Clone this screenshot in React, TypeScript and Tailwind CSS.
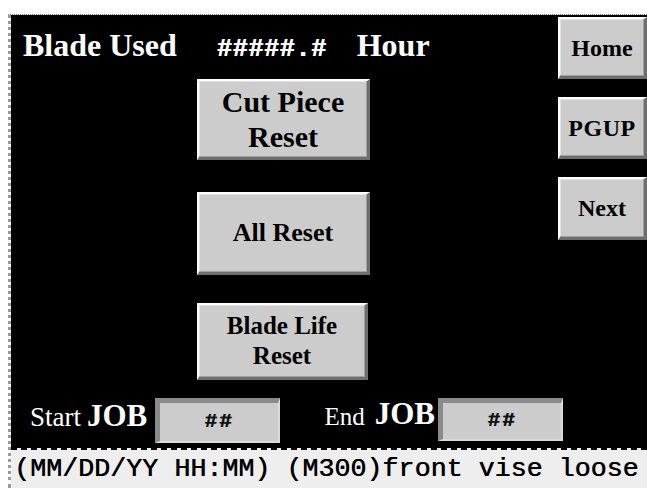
import React from "react";

const serif = "font-['Liberation_Serif','Times_New_Roman',serif]";
const mono = "font-['Liberation_Mono','Courier_New',monospace]";
const bevel =
  "bg-[#cccccc] border-t-2 border-l-2 border-t-white border-l-white border-r-[3px] border-b-[3px] border-r-[#6e6e6e] border-b-[#6e6e6e] shadow-[inset_-1px_-1px_0_#a0a0a0,inset_1px_1px_0_#e4e4e4] flex flex-col items-center justify-center text-black font-bold";
const sunken =
  "bg-[#cccccc] border-t-[5px] border-l-[5px] border-t-[#8a8a8a] border-l-[#8a8a8a] border-r-2 border-b-2 border-r-[#dadada] border-b-[#dadada] flex items-center justify-center";

export default function App() {
  return (
    <div className={`w-[647px] h-[488px] bg-white overflow-hidden pt-[14px] pl-[8px] ${serif}`}>
      <div className="h-[474px] w-[639px] bg-white border-t border-t-[#777777] border-l-[3px] border-l-[#9a9a9a] border-dotted flex flex-col">
        {/* black panel */}
        <div className="h-[433px] bg-black flex flex-col">
          <div className="flex h-[365px]">
            {/* left part */}
            <div className="w-[547px] flex flex-col">
              <div className="h-[64px] flex items-baseline pt-[14px] pl-[12px] text-white font-bold leading-[32px]">
                <span className="text-[32px]">Blade Used</span>
                <span className={`${mono} text-[25px] tracking-[0.7px] ml-[40px] [text-shadow:0.7px_0_0_#fff]`}>#####.#</span>
                <span className="text-[32px] ml-[30px]">Hour</span>
              </div>
              <div className="pl-[186px] flex flex-col">
                <div className={`${bevel} w-[173px] h-[81px] text-[30px] leading-[35px]`}>
                  <span>Cut Piece</span>
                  <span>Reset</span>
                </div>
                <div className={`${bevel} w-[173px] h-[83px] mt-[32px] text-[26px] leading-[30px]`}>
                  <span>All Reset</span>
                </div>
                <div className={`${bevel} w-[171px] h-[77px] mt-[28px] text-[25px] leading-[30px]`}>
                  <span>Blade Life</span>
                  <span>Reset</span>
                </div>
              </div>
            </div>
            {/* right column */}
            <div className="w-[89px] pt-[2px] flex flex-col gap-[18px]">
              <div className={`${bevel} border-r-0 h-[62px] text-[24px]`}>Home</div>
              <div className={`${bevel} border-r-0 h-[62px] text-[24px] tracking-[0.5px]`}>PGUP</div>
              <div className={`${bevel} border-r-0 h-[63px] text-[24px]`}>Next</div>
            </div>
          </div>
          {/* bottom row */}
          <div className="mt-[18px] h-[45px] flex items-stretch">
            <div className="w-[144px] pl-[19px] flex items-end pb-[12px] text-white leading-none">
              <span className="text-[27px]">Start</span>
              <span className="text-[31px] font-bold ml-[6px]">JOB</span>
            </div>
            <div className={`${sunken} w-[125px]`}>
              <span className={`${mono} text-[21px] font-bold tracking-[2px] text-[#111] [text-shadow:0.7px_0_0_#111]`}>##</span>
            </div>
            <div className="w-[158px] pr-[3px] flex items-end justify-end pb-[14px] text-white leading-none">
              <span className="text-[25px]">End</span>
              <span className="text-[31px] font-bold ml-[10px]">JOB</span>
            </div>
            <div className={`${sunken} w-[125px] h-[43px]`}>
              <span className={`${mono} text-[21px] font-bold tracking-[2px] text-[#111] [text-shadow:0.7px_0_0_#111]`}>##</span>
            </div>
          </div>
        </div>
        {/* status bar */}
        <div className="flex-1 bg-[#eeeeee] border-t-2 border-dashed border-t-black pl-[3px]">
          <div className={`${mono} text-[26.7px] leading-[38px] text-black whitespace-pre [text-shadow:0.5px_0_0_#000]`}>
            (MM/DD/YY HH:MM) (M300)front vise loose
          </div>
        </div>
      </div>
    </div>
  );
}
